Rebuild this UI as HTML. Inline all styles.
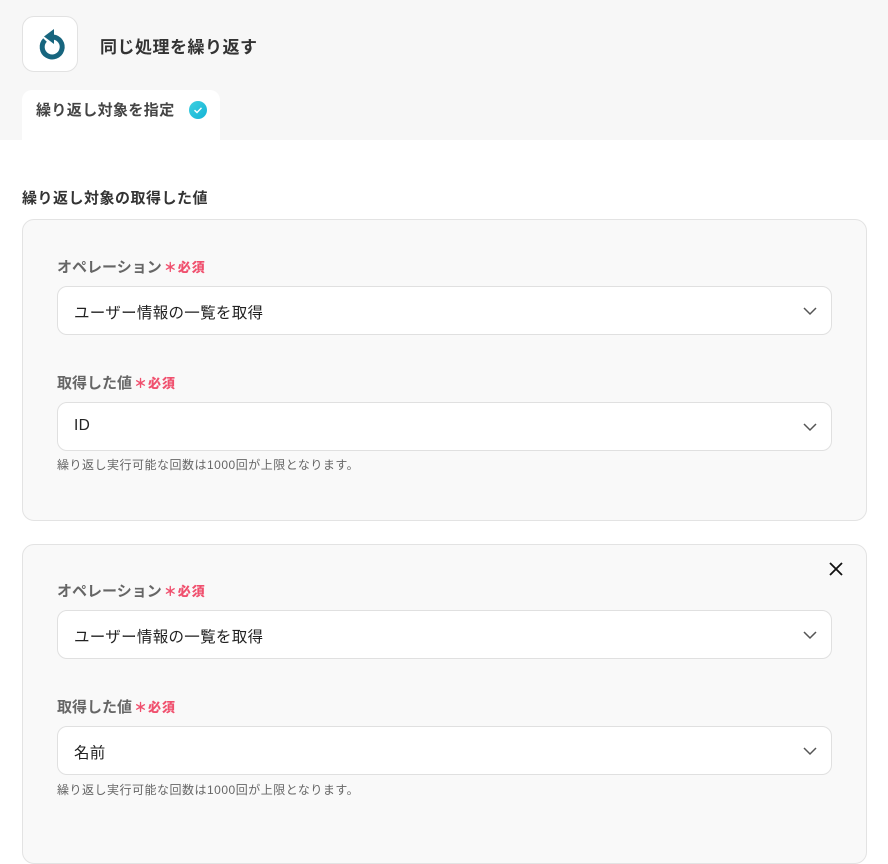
<!DOCTYPE html>
<html><head><meta charset="utf-8"><style>
*{box-sizing:border-box;margin:0;padding:0}
body{width:888px;height:829px;overflow:hidden;background:#fff;font-family:"Liberation Sans","Noto Sans CJK JP",sans-serif;color:#333;position:relative}
.top{position:absolute;left:0;top:0;width:888px;height:140px;background:#f7f7f7}
.icon{position:absolute;left:22px;top:16px;width:56px;height:56px;background:#fff;border:1px solid #e2e2e2;border-radius:12px}
.title{position:absolute;left:100px;top:33px;font-size:17px;letter-spacing:0.5px;font-weight:bold;color:#333}
.tab{position:absolute;left:22px;top:90px;width:198px;height:50px;background:#fff;border-radius:10px 10px 0 0}
.tab span{position:absolute;left:14px;top:9px;font-size:15px;letter-spacing:0.4px;font-weight:bold;color:#444}
.chk{position:absolute;left:167px;top:11px;width:18px;height:18px;border-radius:50%;background:linear-gradient(135deg,#3ed0e0,#14b3d6)}
.sec{position:absolute;left:22px;top:187px;font-size:15px;letter-spacing:0.5px;font-weight:bold;color:#333}
.card{position:absolute;left:22px;width:845px;background:#f9f9f9;border:1px solid #e3e3e3;border-radius:12px}
.lab{position:absolute;left:57px;font-size:15px;font-weight:bold;color:#666}
.lab b{color:#f0506e;font-size:13px;margin-left:2px;letter-spacing:1px}
.sel{position:absolute;left:57px;width:775px;height:49px;background:#fff;border:1px solid #e0e0e0;border-radius:10px;font-size:15.5px;letter-spacing:0.3px;color:#222;padding:14px 0 0 16px}
.sel svg{position:absolute;right:14px;top:19px}
.help{position:absolute;left:57px;font-size:12px;letter-spacing:0.5px;color:#666}
</style></head><body>
<div class="top"></div>
<div class="icon"><svg width="56" height="56" viewBox="0 0 56 56"><path d="M22 23 A10 10 0 1 0 30 20" fill="none" stroke="#17657e" stroke-width="5"/><path d="M31 12 L31 27 L21 19.5 Z" fill="#17657e"/></svg></div>
<div class="title">同じ処理を繰り返す</div>
<div class="tab"><span>繰り返し対象を指定</span><div class="chk"><svg width="18" height="18"><path d="M5.5 9.2 L8 11.5 L12.5 6.8" fill="none" stroke="#fff" stroke-width="1.4"/></svg></div></div>
<div class="sec">繰り返し対象の取得した値</div>

<div class="card" style="top:219px;height:302px"></div>
<div class="lab" style="top:256px">オペレーション<b>＊必須</b></div>
<div class="sel" style="top:286px">ユーザー情報の一覧を取得<svg width="14" height="10"><path d="M1 2 L7 8 L13 2" fill="none" stroke="#555" stroke-width="1.5"/></svg></div>
<div class="lab" style="top:372px">取得した値<b>＊必須</b></div>
<div class="sel" style="top:402px">ID<svg width="14" height="10"><path d="M1 2 L7 8 L13 2" fill="none" stroke="#555" stroke-width="1.5"/></svg></div>
<div class="help" style="top:456px">繰り返し実行可能な回数は1000回が上限となります。</div>

<div class="card" style="top:544px;height:320px"></div>
<svg style="position:absolute;left:829px;top:562px" width="14" height="14"><path d="M1 1 L13 13 M13 1 L1 13" stroke="#111" stroke-width="1.8"/></svg>
<div class="lab" style="top:580px">オペレーション<b>＊必須</b></div>
<div class="sel" style="top:610px">ユーザー情報の一覧を取得<svg width="14" height="10"><path d="M1 2 L7 8 L13 2" fill="none" stroke="#555" stroke-width="1.5"/></svg></div>
<div class="lab" style="top:696px">取得した値<b>＊必須</b></div>
<div class="sel" style="top:726px">名前<svg width="14" height="10"><path d="M1 2 L7 8 L13 2" fill="none" stroke="#555" stroke-width="1.5"/></svg></div>
<div class="help" style="top:781px">繰り返し実行可能な回数は1000回が上限となります。</div>
</body></html>
